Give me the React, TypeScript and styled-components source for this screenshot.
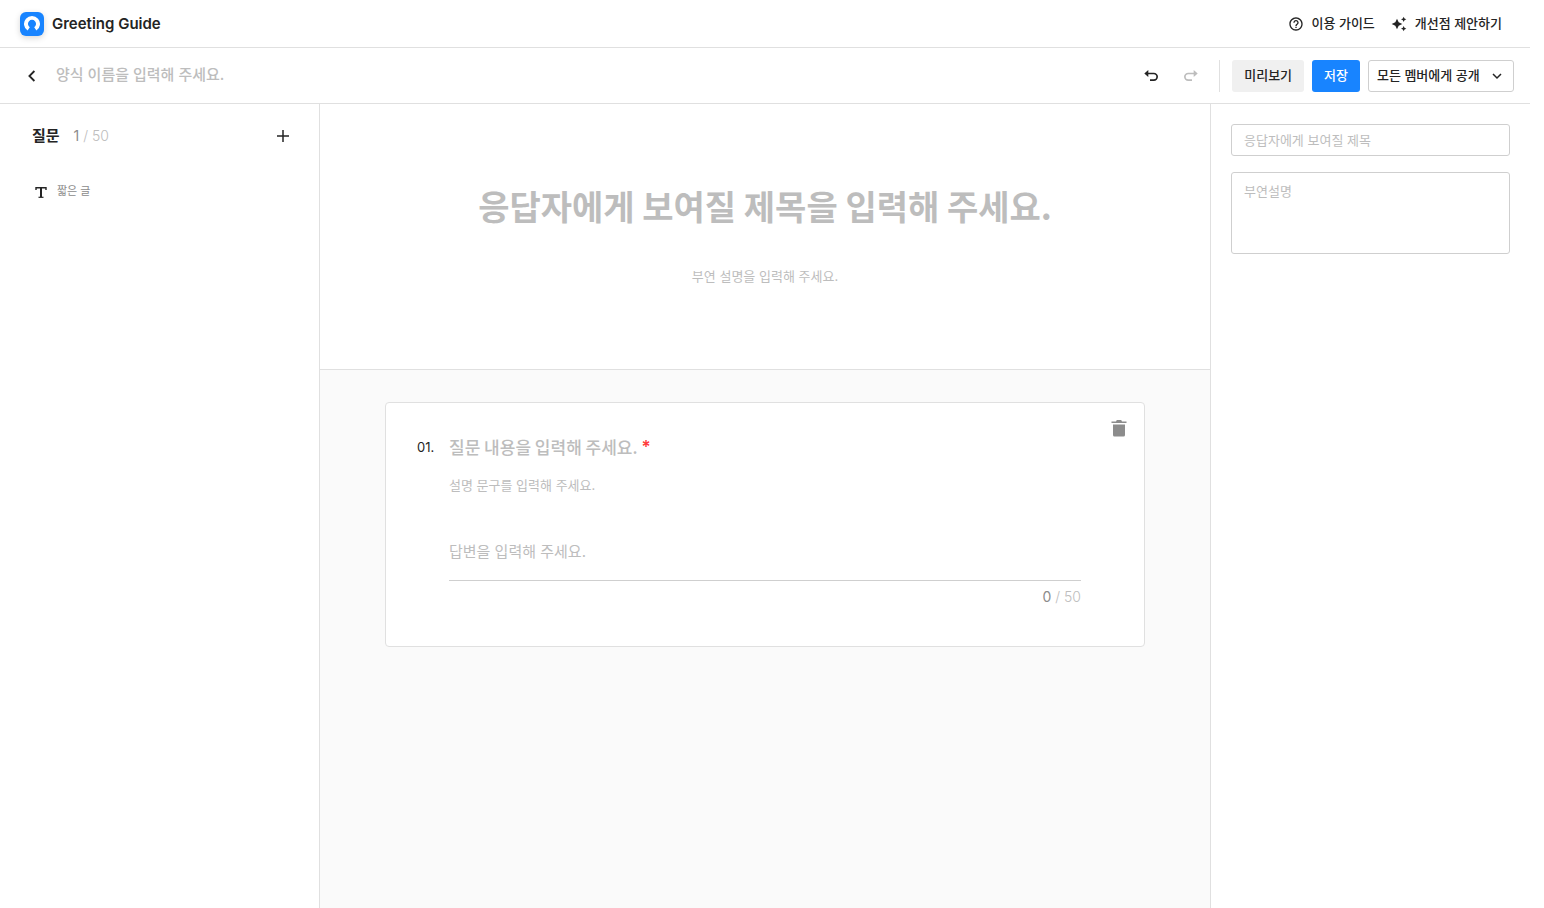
import React from "react";
import styled, { createGlobalStyle } from "styled-components";

const GlobalStyle = createGlobalStyle`
  *, *::before, *::after { box-sizing: border-box; }
  body {
    margin: 0;
    background: #fff;
    color: #242424;
    font-family: Inter, "Noto Sans CJK KR", sans-serif;
    font-size: 13px;
    line-height: 20px;
  }
  h1, h2, p { margin: 0; }
  button, input, textarea, select { font: inherit; color: inherit; margin: 0; }
  input::placeholder, textarea::placeholder { color: #bdbdbd; opacity: 1; }
  svg { display: block; flex: none; }
`;

const hangul = `"Noto Sans CJK KR", Inter, sans-serif`;

const Page = styled.div`
  min-height: 100vh;
  padding-right: 14px;
  display: flex;
  flex-direction: column;
`;

const Bar = styled.header<{ $height: number }>`
  height: ${(p) => p.$height}px;
  display: flex;
  align-items: center;
  justify-content: space-between;
  border-bottom: 1px solid #e0e0e0;
`;

const TopBar = styled(Bar)`
  padding: 0 28px 0 20px;
`;

const ToolBar = styled(Bar).attrs({ as: "div" })`
  padding: 0 16px 0 20px;
`;

const Group = styled.div<{ $gap: number }>`
  display: flex;
  align-items: center;
  gap: ${(p) => p.$gap}px;
`;

const LogoMark = styled.span`
  width: 24px;
  height: 24px;
  border-radius: 6px;
  background: #1884ff;
  box-shadow: 0 2px 6px rgba(0, 0, 0, 0.16);
`;

const Brand = styled.h1`
  font-size: 15px;
  font-weight: 600;
`;

const HelpLink = styled.a`
  display: flex;
  align-items: center;
  gap: 8px;
  color: inherit;
  font-weight: 500;
  text-decoration: none;
  span { padding-bottom: 2px; }
`;

const IconButton = styled.button<{ $size: number }>`
  width: ${(p) => p.$size}px;
  height: ${(p) => p.$size}px;
  padding: 0;
  border: 0;
  background: none;
  display: grid;
  place-items: center;
  cursor: pointer;
  &:disabled { color: #bdbdbd; cursor: default; }
`;

const FormName = styled.input`
  width: 320px;
  padding: 0 0 2px;
  border: 0;
  outline: 0;
  background: none;
  font-size: 15px;
  line-height: 24px;
  font-weight: 500;
`;

const Divider = styled.span`
  width: 1px;
  height: 32px;
  margin: 0 4px;
  background: #e0e0e0;
`;

const Button = styled.button<{ $primary?: boolean }>`
  height: 32px;
  padding: 0 12px 2px;
  border: 0;
  border-radius: 3px;
  background: ${(p) => (p.$primary ? "#1884ff" : "#f0f0f0")};
  color: ${(p) => (p.$primary ? "#fff" : "#242424")};
  font-weight: 500;
  cursor: pointer;
`;

const SelectBox = styled.div`
  position: relative;
  display: flex;
  svg {
    position: absolute;
    right: 9px;
    top: 8px;
    pointer-events: none;
  }
`;

const Select = styled.select`
  height: 32px;
  padding: 0 33px 2px 8px;
  border: 1px solid #cfcfcf;
  border-radius: 3px;
  background: #fff;
  appearance: none;
  font-weight: 500;
`;

const Body = styled.div`
  flex: 1;
  display: grid;
  grid-template-columns: 320px minmax(0, 1fr) 320px;
`;

const Sidebar = styled.aside`
  border-right: 1px solid #e0e0e0;
`;

const SidebarHead = styled.div`
  display: flex;
  align-items: center;
  justify-content: space-between;
  padding: 20px 24px 20px 32px;
`;

const SidebarTitle = styled.h2`
  font-size: 15px;
  line-height: 24px;
  font-weight: 700;
`;

const Count = styled.span`
  color: #bdbdbd;
  font-size: 14px;
  font-weight: 300;
  b { font-weight: 400; color: #8c8c8c; }
`;

const QuestionLink = styled.a`
  display: flex;
  align-items: center;
  gap: 8px;
  padding: 15px 33px;
  color: #8c8c8c;
  font-size: 11px;
  line-height: 16px;
  text-decoration: none;
  svg { color: #242424; }
`;

const Canvas = styled.main`
  background: #fafafa;
`;

const Hero = styled.section`
  display: flex;
  flex-direction: column;
  align-items: center;
  gap: 32px;
  padding: 74px 64px 83px;
  border-bottom: 1px solid #e0e0e0;
  background: #fff;
`;

const PlainInput = styled.input`
  width: 100%;
  padding: 0;
  border: 0;
  outline: 0;
  background: none;
`;

const HeroTitle = styled(PlainInput)`
  height: 56px;
  font-family: ${hangul};
  font-size: 34px;
  line-height: 56px;
  font-weight: 700;
  text-align: center;
`;

const HeroText = styled(PlainInput)`
  height: 20px;
  text-align: center;
`;

const Card = styled.section`
  max-width: 760px;
  margin: 32px auto;
  padding: 12px 13px 39px 31px;
  display: grid;
  grid-template-columns: 32px minmax(0, 1fr) 50px;
  border: 1px solid #e0e0e0;
  border-radius: 4px;
  background: #fff;
`;

const Index = styled.span`
  padding-top: 22px;
`;

const Fields = styled.div`
  padding-top: 19px;
`;

const TitleRow = styled.div`
  display: flex;
  gap: 4px;
  height: 24px;
`;

const QuestionTitle = styled(PlainInput)`
  width: auto;
  field-sizing: content;
  font-family: ${hangul};
  font-size: 17px;
  line-height: 24px;
  font-weight: 500;
`;

const Required = styled.span`
  color: #ff3b3b;
  font-size: 17px;
  line-height: 26px;
  font-weight: 600;
`;

const Description = styled(PlainInput)`
  display: block;
  height: 20px;
  margin-top: 17px;
`;

const Answer = styled(PlainInput)`
  display: block;
  height: 58px;
  margin-top: 28px;
  border-bottom: 1px solid #cfcfcf;
  font-size: 15px;
`;

const AnswerCount = styled.p`
  padding-top: 6px;
  text-align: right;
`;

const DeleteButton = styled(IconButton)`
  justify-self: end;
  margin-top: 1px;
  color: #8c8c8c;
`;

const Panel = styled.aside`
  display: flex;
  flex-direction: column;
  gap: 16px;
  padding: 20px;
  border-left: 1px solid #e0e0e0;
`;

const TextField = styled.input`
  height: 32px;
  padding: 0 12px;
  border: 1px solid #cfcfcf;
  border-radius: 3px;
`;

const TextArea = styled.textarea`
  height: 82px;
  padding: 8px 12px;
  border: 1px solid #cfcfcf;
  border-radius: 3px;
  resize: none;
`;

const Logo = () => (
  <LogoMark>
    <svg width="24" height="24" viewBox="0 0 24 24" fill="#fff" aria-hidden="true">
      <path d="M7.6 18.6A8 8 0 1 1 16.4 18.6L14.2 15.2A4 4 0 1 0 9.8 15.2Z" />
    </svg>
  </LogoMark>
);

const HelpIcon = () => (
  <svg width="16" height="16" viewBox="0 0 24 24" fill="currentColor" aria-hidden="true">
    <path d="M11 18h2v-2h-2v2zm1-16C6.48 2 2 6.48 2 12s4.48 10 10 10 10-4.48 10-10S17.52 2 12 2zm0 18c-4.41 0-8-3.59-8-8s3.59-8 8-8 8 3.59 8 8-3.59 8-8 8zm0-14c-2.21 0-4 1.79-4 4h2c0-1.1.9-2 2-2s2 .9 2 2c0 2-3 1.75-3 5h2c0-2.25 3-2.5 3-5 0-2.21-1.79-4-4-4z" />
  </svg>
);

const SparkleIcon = () => (
  <svg width="16" height="16" viewBox="0 0 24 24" fill="currentColor" aria-hidden="true">
    <path d="M19 9l1.25-2.75L23 5l-2.75-1.25L19 1l-1.25 2.75L15 5l2.75 1.25L19 9zm-7.5.5L9 4 6.5 9.5 1 12l5.5 2.5L9 20l2.5-5.5L17 12l-5.5-2.5zM19 15l-1.25 2.75L15 19l2.75 1.25L19 23l1.25-2.75L23 19l-2.75-1.25L19 15z" />
  </svg>
);

const ChevronIcon = ({ left }: { left?: boolean }) => (
  <svg
    width="16"
    height="16"
    viewBox="0 0 16 16"
    fill="none"
    stroke="currentColor"
    strokeWidth={left ? 1.8 : 1.5}
    aria-hidden="true"
  >
    <path d={left ? "M10.400 3L5.400 8l5 5" : "M4 6l4 4 4-4"} />
  </svg>
);

const UndoIcon = ({ redo }: { redo?: boolean }) => (
  <svg width="16" height="16" viewBox="0 0 16 16" fill="none" aria-hidden="true">
    <g transform={redo ? "matrix(-1 0 0 1 16 0)" : undefined}>
      <path d="M4 5.5H10.800A3.300 3.300 0 0 1 10.800 12.200H7" stroke="currentColor" strokeWidth="1.7" />
      <path d="M1.300 5.500L5.300 2V9Z" fill="currentColor" />
    </g>
  </svg>
);

const PlusIcon = () => (
  <svg width="16" height="16" viewBox="0 0 16 16" stroke="currentColor" strokeWidth="1.5" aria-hidden="true">
    <path d="M8 2v12M2 8h12" />
  </svg>
);

const ShortTextIcon = () => (
  <svg width="16" height="16" viewBox="0 0 16 16" fill="none" stroke="currentColor" aria-hidden="true">
    <path d="M3 7V4.700H13V7" strokeWidth="1.4" />
    <path d="M8 4.500V14" strokeWidth="2" />
    <path d="M5.500 14.300h5" strokeWidth="1.2" />
  </svg>
);

const TrashIcon = () => (
  <svg width="24" height="24" viewBox="0 0 24 24" fill="currentColor" aria-hidden="true">
    <path d="M6 8.500h12V19a1.500 1.500 0 0 1-1.500 1.500h-9A1.500 1.500 0 0 1 6 19zM4.500 5.500H9l.8-1.500h4.400l.8 1.500h4.500V7h-15z" />
  </svg>
);

export default function App() {
  return (
    <>
      <GlobalStyle />
      <Page>
        <TopBar $height={48}>
          <Group $gap={8}>
            <Logo />
            <Brand>Greeting Guide</Brand>
          </Group>
          <Group $gap={16}>
            <HelpLink href="#guide">
              <HelpIcon />
              <span>이용 가이드</span>
            </HelpLink>
            <HelpLink href="#feedback">
              <SparkleIcon />
              <span>개선점 제안하기</span>
            </HelpLink>
          </Group>
        </TopBar>

        <ToolBar $height={56}>
          <Group $gap={12}>
            <IconButton $size={24} aria-label="뒤로">
              <ChevronIcon left />
            </IconButton>
            <FormName aria-label="양식 이름" placeholder="양식 이름을 입력해 주세요." />
          </Group>
          <Group $gap={8}>
            <IconButton $size={32} aria-label="실행 취소">
              <UndoIcon />
            </IconButton>
            <IconButton $size={32} aria-label="다시 실행" disabled>
              <UndoIcon redo />
            </IconButton>
            <Divider />
            <Button type="button">미리보기</Button>
            <Button type="button" $primary>저장</Button>
            <SelectBox>
              <Select aria-label="공개 범위">
                <option>모든 멤버에게 공개</option>
              </Select>
              <ChevronIcon />
            </SelectBox>
          </Group>
        </ToolBar>

        <Body>
          <Sidebar>
            <SidebarHead>
              <Group $gap={14}>
                <SidebarTitle>질문</SidebarTitle>
                <Count><b>1</b> / 50</Count>
              </Group>
              <IconButton $size={24} aria-label="질문 추가">
                <PlusIcon />
              </IconButton>
            </SidebarHead>
            <nav>
              <QuestionLink href="#question-1">
                <ShortTextIcon />
                짧은 글
              </QuestionLink>
            </nav>
          </Sidebar>

          <Canvas>
            <Hero>
              <HeroTitle aria-label="제목" placeholder="응답자에게 보여질 제목을 입력해 주세요." />
              <HeroText aria-label="부연 설명" placeholder="부연 설명을 입력해 주세요." />
            </Hero>
            <Card id="question-1">
              <Index>01.</Index>
              <Fields>
                <TitleRow>
                  <QuestionTitle aria-label="질문 내용" placeholder="질문 내용을 입력해 주세요." />
                  <Required>*</Required>
                </TitleRow>
                <Description aria-label="설명 문구" placeholder="설명 문구를 입력해 주세요." />
                <Answer aria-label="답변" placeholder="답변을 입력해 주세요." />
                <AnswerCount>
                  <Count><b>0</b> / 50</Count>
                </AnswerCount>
              </Fields>
              <DeleteButton $size={24} aria-label="질문 삭제">
                <TrashIcon />
              </DeleteButton>
            </Card>
          </Canvas>

          <Panel>
            <TextField aria-label="제목" placeholder="응답자에게 보여질 제목" />
            <TextArea aria-label="부연설명" placeholder="부연설명" />
          </Panel>
        </Body>
      </Page>
    </>
  );
}
